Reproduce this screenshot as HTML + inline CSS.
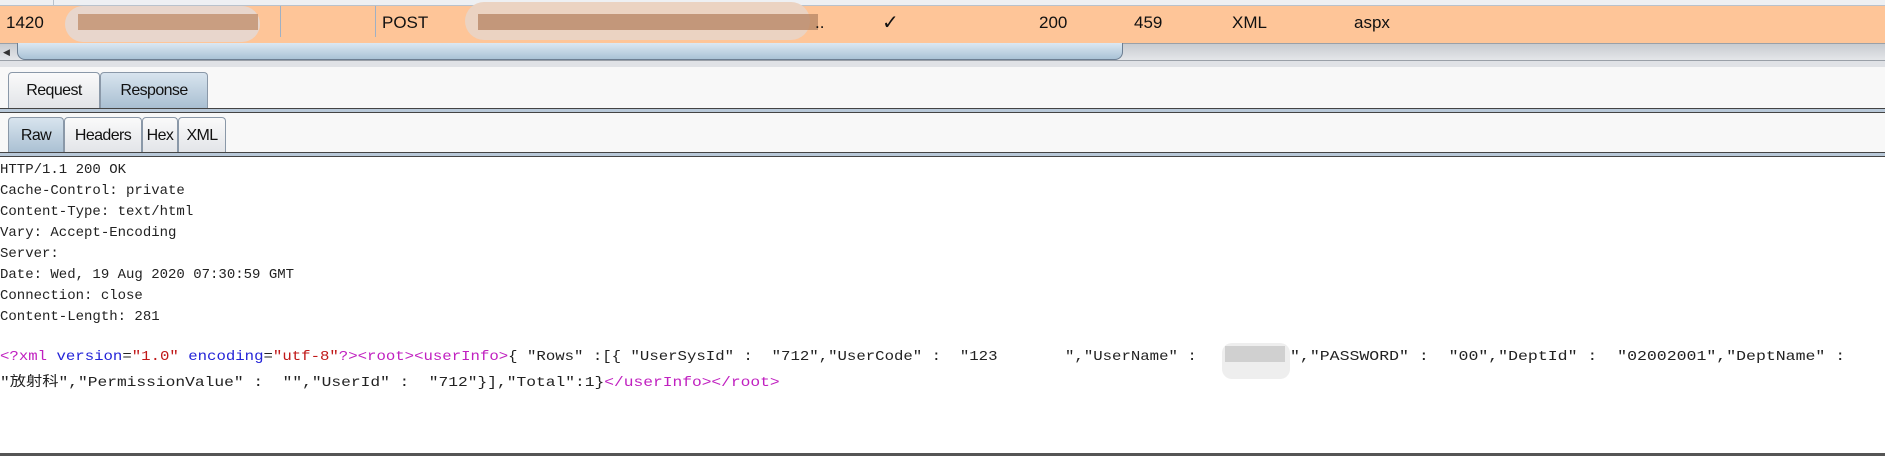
<!DOCTYPE html>
<html><head><meta charset="utf-8"><style>
*{margin:0;padding:0;box-sizing:border-box}
body{width:1885px;height:456px;background:#fff;position:relative;overflow:hidden;font-family:"Liberation Sans",sans-serif}
.a{position:absolute}
.cell{position:absolute;top:13px;font-size:17px;color:#111}
.tab{position:absolute;border:1px solid #8a98a8;border-bottom:none;border-radius:4px 4px 0 0;background:linear-gradient(#fafafa,#e2e4e8);font-size:16px;letter-spacing:-0.6px;color:#111;text-align:center;padding-top:9px;overflow:hidden;white-space:nowrap}
.sel{background:linear-gradient(#d8e4ee,#a9bfd2)}
.ln{position:absolute;left:0;font-family:"Liberation Mono","Noto Sans CJK SC",monospace;font-size:14px;color:#222;white-space:pre;transform-origin:0 0}
.b{color:#2424d8}.r{color:#c01818}.m{color:#c020c0}
</style></head><body>
<div class="a" style="left:0;top:0;width:1885px;height:6px;background:#eef0f3;border-bottom:1px solid #b9c2cc"></div>
<div class="a" style="left:53px;top:0;width:1px;height:6px;background:#b9c2cc"></div>
<div class="a" style="left:0;top:6px;width:1885px;height:37px;background:#fec598"></div>
<div class="a" style="left:280px;top:6px;width:1px;height:31px;background:#9fb0c4"></div>
<div class="a" style="left:375px;top:6px;width:1px;height:31px;background:#9fb0c4"></div>
<div class="a" style="left:65px;top:6px;width:195px;height:36px;border-radius:18px;background:#e8d6cc"></div>
<div class="a" style="left:78px;top:14px;width:180px;height:16px;background:#c1906e;opacity:.8"></div>
<div class="a" style="left:465px;top:2px;width:345px;height:38px;border-radius:20px;background:#ebd3c2"></div>
<div class="a" style="left:478px;top:14px;width:340px;height:16px;background:#b98868;opacity:.8"></div>
<div class="cell" style="left:6px">1420</div>
<div class="cell" style="left:382px">POST</div>
<div class="cell" style="left:815px">..</div>
<div class="cell" style="left:882px;font-size:20px;top:10px">✓</div>
<div class="cell" style="left:1039px">200</div>
<div class="cell" style="left:1134px">459</div>
<div class="cell" style="left:1232px">XML</div>
<div class="cell" style="left:1354px">aspx</div>
<div class="a" style="left:0;top:43px;width:1885px;height:18px;background:linear-gradient(#c8cbd0,#e4e6e9);border-top:1px solid #9aa0a8;border-bottom:1px solid #9aa0a8"></div>
<div class="a" style="left:17px;top:43px;width:1106px;height:17px;border-radius:0 0 8px 8px;background:linear-gradient(#dce8f2,#a9c2d6);border:1px solid #6c7e92;border-top:none"></div>
<div class="a" style="left:3px;top:47px;font-size:9px;color:#333">◀</div>
<div class="a" style="left:0;top:61px;width:1885px;height:6px;background:#e0e2e6"></div>
<div class="a" style="left:0;top:67px;width:1885px;height:86px;background:#f8f8f8"></div>
<div class="tab" style="left:8px;top:72px;width:92px;height:36px">Request</div>
<div class="tab sel" style="left:100px;top:72px;width:108px;height:36px">Response</div>
<div class="a" style="left:0;top:108px;width:1885px;height:5px;background:#b8c8d8;border-top:1px solid #444;border-bottom:1px solid #444"></div>
<div class="tab sel" style="left:8px;top:117px;width:56px;height:36px">Raw</div>
<div class="tab" style="left:64px;top:117px;width:78px;height:36px">Headers</div>
<div class="tab" style="left:142px;top:117px;width:36px;height:36px">Hex</div>
<div class="tab" style="left:178px;top:117px;width:48px;height:36px">XML</div>
<div class="a" style="left:0;top:152px;width:1885px;height:5px;background:#b8c8d8;border-top:1px solid #444;border-bottom:1px solid #444"></div>
<div class="ln" style="top:162px">HTTP/1.1 200 OK</div>
<div class="ln" style="top:183px">Cache-Control: private</div>
<div class="ln" style="top:204px">Content-Type: text/html</div>
<div class="ln" style="top:225px">Vary: Accept-Encoding</div>
<div class="ln" style="top:246px">Server:</div>
<div class="ln" style="top:267px">Date: Wed, 19 Aug 2020 07:30:59 GMT</div>
<div class="ln" style="top:288px">Connection: close</div>
<div class="ln" style="top:309px">Content-Length: 281</div>
<div class="ln" style="top:349px;transform:scaleX(1.12)"><span class="m">&lt;?xml</span> <span class="b">version</span>=<span class="r">"1.0"</span> <span class="b">encoding</span>=<span class="r">"utf-8"</span><span class="m">?&gt;&lt;root&gt;&lt;userInfo&gt;</span>{ "Rows" :[{ "UserSysId" :  "712","UserCode" :  "123</div>
<div class="ln" style="top:349px;left:1065px;transform:scaleX(1.12)">","UserName" :</div>
<div class="a" style="left:1222px;top:343px;width:68px;height:36px;border-radius:10px;background:#eeeeee"></div>
<div class="a" style="left:1225px;top:346px;width:60px;height:16px;background:#d0d0d0"></div>
<div class="ln" style="top:349px;left:1290px;transform:scaleX(1.18)">","PASSWORD" :  "00","DeptId" :  "02002001","DeptName" :</div>
<div class="ln" style="top:371px;transform:scaleX(1.16)">"放射科","PermissionValue" :  "","UserId" :  "712"}],"Total":1}<span class="m">&lt;/userInfo&gt;&lt;/root&gt;</span></div>
<div class="a" style="left:0;top:453px;width:1885px;height:3px;background:#555"></div>
</body></html>
